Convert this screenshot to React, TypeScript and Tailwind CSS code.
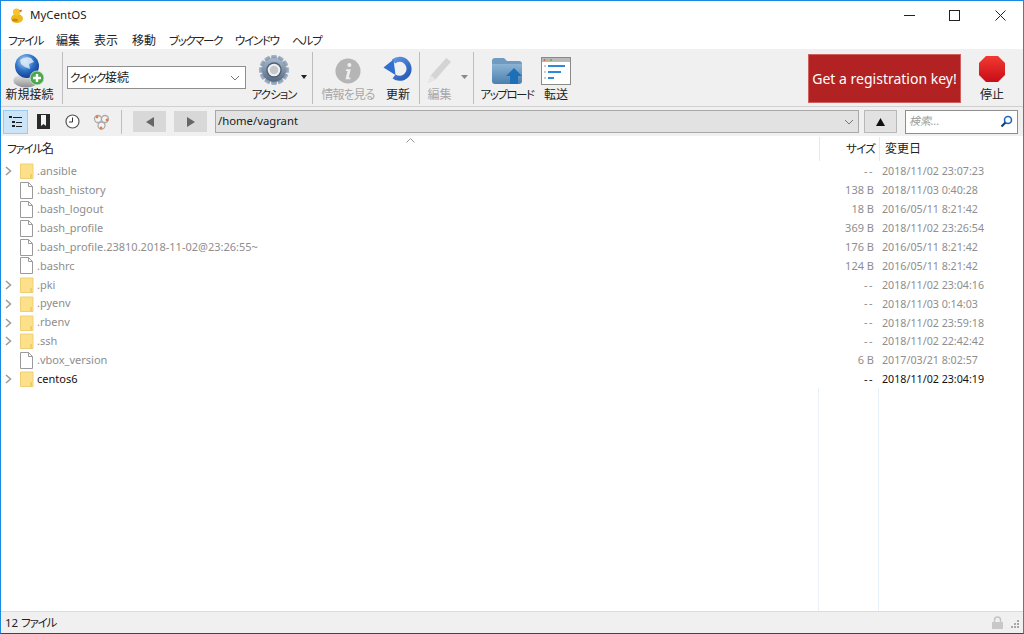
import React from "react";

const font = "font-['Noto_Sans','Noto_Sans_CJK_JP',sans-serif] [font-feature-settings:'palt']";

const rows: { n: string; s: string; d: string; dir: boolean; dark?: boolean }[] = [
  { n: ".ansible", s: "--", d: "2018/11/02 23:07:23", dir: true },
  { n: ".bash_history", s: "138 B", d: "2018/11/03 0:40:28", dir: false },
  { n: ".bash_logout", s: "18 B", d: "2016/05/11 8:21:42", dir: false },
  { n: ".bash_profile", s: "369 B", d: "2018/11/02 23:26:54", dir: false },
  { n: ".bash_profile.23810.2018-11-02@23:26:55~", s: "176 B", d: "2016/05/11 8:21:42", dir: false },
  { n: ".bashrc", s: "124 B", d: "2016/05/11 8:21:42", dir: false },
  { n: ".pki", s: "--", d: "2018/11/02 23:04:16", dir: true },
  { n: ".pyenv", s: "--", d: "2018/11/03 0:14:03", dir: true },
  { n: ".rbenv", s: "--", d: "2018/11/02 23:59:18", dir: true },
  { n: ".ssh", s: "--", d: "2018/11/02 22:42:42", dir: true },
  { n: ".vbox_version", s: "6 B", d: "2017/03/21 8:02:57", dir: false },
  { n: "centos6", s: "--", d: "2018/11/02 23:04:19", dir: true, dark: true },
];

const menus: { t: string; c: string }[] = [
  { t: "ファイル", c: "w-[34px] text-[11.5px] tracking-[-1.2px]" },
  { t: "編集", c: "w-[24px] text-[12px]" },
  { t: "表示", c: "w-[24px] text-[12px]" },
  { t: "移動", c: "w-[23px] text-[12px]" },
  { t: "ブックマーク", c: "w-[52px] text-[11.5px] tracking-[-1.4px]" },
  { t: "ウインドウ", c: "w-[43px] text-[11.5px] tracking-[-1.3px]" },
  { t: "ヘルプ", c: "w-[28px] text-[11.5px] tracking-[-1.1px]" },
];

function Duck() {
  return (
    <svg width="16" height="17" viewBox="0 0 16 17">
      <ellipse cx="8" cy="11.5" rx="6" ry="4.5" fill="#f0b820" />
      <circle cx="7.5" cy="5" r="3.6" fill="#f5c62c" />
      <path d="M10 3.5 L13 2.5 L12 5.5 Z" fill="#d9601a" />
      <ellipse cx="6" cy="13" rx="3" ry="1.6" fill="#c98a10" />
    </svg>
  );
}

function GlobeIcon() {
  return (
    <svg className="mt-[2px]" width="36" height="36" viewBox="0 0 36 36">
      <defs>
        <radialGradient id="gl" cx="40%" cy="30%" r="70%">
          <stop offset="0" stopColor="#b5d8f7" />
          <stop offset="0.55" stopColor="#2f74c8" />
          <stop offset="1" stopColor="#123f90" />
        </radialGradient>
        <linearGradient id="gb" x1="0" y1="0" x2="0" y2="1">
          <stop offset="0" stopColor="#efefef" />
          <stop offset="1" stopColor="#8f8f8f" />
        </linearGradient>
      </defs>
      <ellipse cx="14" cy="27.5" rx="12.5" ry="7" fill="url(#gb)" />
      <circle cx="15" cy="13" r="12" fill="url(#gl)" />
      <path d="M8 7 Q13 3 19 5 L22 9 L17 11 L18 16 L13 14 L9 11 Z" fill="#e3eef8" opacity="0.8" />
      <circle cx="25" cy="25" r="7" fill="#4ea64e" stroke="#d8ecd8" strokeWidth="0.8" />
      <path d="M25 21v8M21 25h8" stroke="#fff" strokeWidth="2.4" />
    </svg>
  );
}

function GearIcon() {
  const teeth = Array.from({ length: 12 }, (_, i) => i * 30);
  return (
    <svg className="mt-[3px]" width="32" height="32" viewBox="0 0 34 34">
      <defs>
        <linearGradient id="ge" x1="0" y1="0" x2="0" y2="1">
          <stop offset="0" stopColor="#a9bacd" />
          <stop offset="1" stopColor="#54687f" />
        </linearGradient>
      </defs>
      {teeth.map((a) => (
        <rect key={a} x="14" y="1" width="6" height="8" rx="1" fill="url(#ge)" transform={`rotate(${a} 17 17)`} />
      ))}
      <circle cx="17" cy="17" r="12.5" fill="url(#ge)" />
      <circle cx="17" cy="17" r="7.5" fill="#f0f0f0" stroke="#4e6075" strokeWidth="1.5" />
      <circle cx="17" cy="17" r="4.5" fill="#c4c8cc" />
    </svg>
  );
}

function InfoIcon() {
  return (
    <svg className="mt-[7px]" width="26" height="26" viewBox="0 0 28 28">
      <circle cx="14" cy="14" r="13.5" fill="#b5b5b5" />
      <circle cx="15.5" cy="7.5" r="2.2" fill="#efefef" />
      <path d="M12 12h5l-2.2 9h2l-.5 2h-5l2.2-9h-2z" fill="#efefef" />
    </svg>
  );
}

function RefreshIcon() {
  return (
    <svg className="mt-[3px]" width="31" height="30" viewBox="0 0 31 30">
      <defs>
        <linearGradient id="rf" gradientUnits="userSpaceOnUse" x1="5" y1="3" x2="28" y2="26">
          <stop offset="0" stopColor="#6aa4ec" />
          <stop offset="1" stopColor="#1c50b0" />
        </linearGradient>
      </defs>
      <path d="M10.5 7.5 A9.5 9.5 0 1 1 11 22.5" fill="none" stroke="url(#rf)" strokeWidth="5" />
      <path d="M0.5 13.5 L10.5 5.5 L12.5 21 Z" fill="#2f6fd0" />
    </svg>
  );
}

function PencilIcon() {
  return (
    <svg className="mt-[5px]" width="27" height="29" viewBox="0 0 28 30">
      <path d="M2 28 L5 20 L21 2 L26 6 L10 24 Z" fill="#d4d4d4" />
      <path d="M2 28 L5 20 L10 24 Z" fill="#e6e6e6" />
    </svg>
  );
}

function UploadIcon() {
  return (
    <svg className="mt-[6px]" width="32" height="28" viewBox="0 0 32 28">
      <defs>
        <linearGradient id="fo" x1="0" y1="0" x2="0" y2="1">
          <stop offset="0" stopColor="#8db3d4" />
          <stop offset="1" stopColor="#4a7fae" />
        </linearGradient>
      </defs>
      <path d="M1 4 Q1 1 4 1 H13 L16 4 H28 Q31 4 31 7 V10 H1 Z" fill="#6f9bc0" />
      <path d="M1 7 H31 V24 Q31 27 28 27 H4 Q1 27 1 24 Z" fill="url(#fo)" />
      <path d="M23 11 L31 19 H27 V27 H19 V19 H15 Z" fill="#1d6fb8" />
    </svg>
  );
}

function TransferIcon() {
  return (
    <svg className="mt-[6px]" width="30" height="28" viewBox="0 0 30 28">
      <rect x="0.5" y="0.5" width="29" height="27" fill="#fff" stroke="#8a8a8a" />
      <rect x="1" y="1" width="28" height="4" fill="#b9b9b9" />
      <circle cx="3.5" cy="3" r="1" fill="#e05a50" />
      <circle cx="7" cy="3" r="1" fill="#e0b040" />
      <circle cx="10" cy="3" r="1" fill="#50b050" />
      <rect x="7" y="8" width="17" height="2" fill="#2b8ae0" />
      <rect x="7" y="14" width="13" height="2" fill="#2b8ae0" />
      <rect x="7" y="20" width="6" height="2" fill="#2b8ae0" />
      <rect x="3" y="8" width="2" height="2" fill="#ccc" />
      <rect x="3" y="14" width="2" height="2" fill="#ccc" />
      <rect x="3" y="20" width="2" height="2" fill="#ccc" />
    </svg>
  );
}

function StopIcon() {
  return (
    <svg className="mt-[4px]" width="28" height="28" viewBox="0 0 28 28">
      <defs>
        <linearGradient id="st" x1="0" y1="0" x2="0" y2="1">
          <stop offset="0" stopColor="#f23a30" />
          <stop offset="1" stopColor="#c80c18" />
        </linearGradient>
      </defs>
      <path d="M8 1 H20 L27 8 V20 L20 27 H8 L1 20 V8 Z" fill="url(#st)" />
    </svg>
  );
}

function FolderIcon() {
  return (
    <svg width="14" height="16" viewBox="0 0 14 16">
      <path d="M0.5 1 H13 V15.5 H0.5 Z" fill="#fde08a" stroke="#f0cf74" />
      <path d="M11 11 V15" stroke="#e3bc55" />
    </svg>
  );
}

function FileIcon() {
  return (
    <svg width="13" height="17" viewBox="0 0 13 17">
      <path d="M0.5 0.5 H8.5 L12.5 4.5 V16.5 H0.5 Z" fill="#fff" stroke="#9a9a9a" />
      <path d="M8.5 0.5 V4.5 H12.5" fill="none" stroke="#9a9a9a" />
    </svg>
  );
}

function Chevron() {
  return (
    <svg width="7" height="10" viewBox="0 0 7 10">
      <path d="M1 1 L5.5 5 L1 9" fill="none" stroke="#999" strokeWidth="1.5" />
    </svg>
  );
}

function Caret() {
  return (
    <svg width="10" height="6" viewBox="0 0 10 6">
      <path d="M1 1 L5 5 L9 1" fill="none" stroke="#777" strokeWidth="1" />
    </svg>
  );
}

function Sep() {
  return <div className="w-px h-[52px] bg-[#bdbdbd] mt-[1px]" />;
}

function Tool({ icon, label, w, muted, tc = "text-[12px]" }: { icon: React.ReactNode; label: string; w: string; muted?: boolean; tc?: string }) {
  return (
    <div className={`${w} flex flex-col items-center shrink-0`}>
      <div className="h-[36px] flex items-start justify-center">{icon}</div>
      <span className={`leading-[16px] whitespace-nowrap ${tc} ${muted ? "text-[#a8a8a8]" : "text-[#222]"}`}>
        {label}
      </span>
    </div>
  );
}

export default function App() {
  return (
    <div className={`${font} w-[1024px] h-[634px] flex flex-col bg-white border-x border-t border-b border-x-[#1a8ae0] border-t-[#1a8ae0] border-b-[#444] overflow-hidden text-[#1a1a1a]`}>
      <div className="h-[28px] flex items-center shrink-0">
        <div className="ml-[8px] mr-[5px] flex"><Duck /></div>
        <span className="text-[11.5px] text-[#222]">MyCentOS</span>
        <div className="ml-auto flex items-center">
          <svg className="mr-[34px]" width="11" height="11" viewBox="0 0 11 11"><path d="M0 5.5H11" stroke="#222" /></svg>
          <svg className="mr-[35px]" width="11" height="11" viewBox="0 0 11 11"><rect x="0.5" y="0.5" width="10" height="10" fill="none" stroke="#222" /></svg>
          <svg className="mr-[17px]" width="11" height="11" viewBox="0 0 11 11"><path d="M0.5 0.5L10.5 10.5M10.5 0.5L0.5 10.5" stroke="#222" /></svg>
        </div>
      </div>

      <div className="h-[20px] flex items-center gap-[14px] pl-[7px] pt-[3px] text-[#222] shrink-0">
        {menus.map((m) => (
          <span key={m.t} className={`${m.c} whitespace-nowrap`}>{m.t}</span>
        ))}
      </div>

      <div className="h-[58px] bg-[#f0f0f0] border-b border-[#d0d0d0] flex items-start pt-[2px] shrink-0">
        <div className="ml-[1px]"><Tool icon={<GlobeIcon />} label="新規接続" w="w-[55px]" /></div>
        <div className="ml-[5px]"><Sep /></div>
        <div className="ml-[4px] mt-[15px] w-[179px] h-[23px] bg-white border border-[#8e8e8e] flex items-center justify-between pl-[2px] pr-[5px] text-[12px]">
          <span className="whitespace-nowrap"><span className="text-[11.5px] tracking-[-1.2px]">クイック</span>接続</span>
          <Caret />
        </div>
        <div className="ml-[1px]"><Tool icon={<GearIcon />} label="アクション" w="w-[54px]" tc="text-[11.5px] tracking-[-1px]" /></div>
        <svg className="mt-[24px]" width="6" height="4" viewBox="0 0 6 4"><path d="M0 0H6L3 4Z" fill="#222" /></svg>
        <div className="ml-[5px]"><Sep /></div>
        <div className="ml-[6px]"><Tool icon={<InfoIcon />} label="情報を見る" w="w-[58px]" muted tc="text-[12px] tracking-[-1px]" /></div>
        <div className="ml-[1px]"><Tool icon={<RefreshIcon />} label="更新" w="w-[40px]" /></div>
        <div className="ml-[1px]"><Sep /></div>
        <div className="ml-[3px]"><Tool icon={<PencilIcon />} label="編集" w="w-[33px]" muted /></div>
        <svg className="ml-[5px] mt-[24px]" width="7" height="4" viewBox="0 0 7 4"><path d="M0 0H7L3.5 4Z" fill="#888" /></svg>
        <div className="ml-[5px]"><Sep /></div>
        <div className="ml-[4px]"><Tool icon={<UploadIcon />} label="アップロード" w="w-[58px]" tc="text-[11.5px] tracking-[-1.5px]" /></div>
        <div className="ml-[1px]"><Tool icon={<TransferIcon />} label="転送" w="w-[38px]" /></div>
        <div className="ml-auto flex items-start">
          <div className="w-[153px] h-[49px] bg-[#b22222] border border-[#d06060] text-white text-[14px] flex items-center justify-center mt-[3px]">
            Get a registration key!
          </div>
          <div className="ml-[9px] mr-[9px]"><Tool icon={<StopIcon />} label="停止" w="w-[44px]" /></div>
        </div>
      </div>

      <div className="h-[29px] bg-[#f0f0f0] flex items-center shrink-0">
        <div className="ml-[2px] w-[25px] h-[24px] bg-[#cce4f7] border border-[#99ccf0] flex items-center justify-center">
          <svg width="13" height="13" viewBox="0 0 13 13">
            <path d="M0 1h3v2H0zM4 2h9v1H4zM3 6h3v2H3zM7 7h6v1H7zM3 10h3v2H3zM7 11h6v1H7z" fill="#222" />
          </svg>
        </div>
        <div className="w-[28px] flex justify-center ml-[1px]">
          <svg width="13" height="15" viewBox="0 0 13 15">
            <path d="M0 0H13V15H0Z" fill="#2a2a2a" />
            <path d="M4 1H9V12L6.5 10L4 12Z" fill="#f4f4f4" />
          </svg>
        </div>
        <div className="w-[30px] flex justify-center">
          <svg width="15" height="15" viewBox="0 0 15 15">
            <circle cx="7.5" cy="7.5" r="6.5" fill="#fff" stroke="#555" strokeWidth="1.2" />
            <path d="M7.5 3.5V8H4" fill="none" stroke="#333" />
          </svg>
        </div>
        <div className="w-[28px] flex justify-center">
          <svg width="17" height="16" viewBox="0 0 17 16">
            <circle cx="5" cy="5" r="3.5" fill="#f4f4f4" stroke="#aaa" strokeWidth="1.3" />
            <circle cx="12" cy="5" r="3.5" fill="#f4f4f4" stroke="#aaa" strokeWidth="1.3" />
            <circle cx="8.5" cy="11.5" r="3.5" fill="#f4f4f4" stroke="#aaa" strokeWidth="1.3" />
            <circle cx="4" cy="3" r="1.4" fill="#e08048" />
            <circle cx="14" cy="6" r="1.4" fill="#e08048" />
            <circle cx="8" cy="14" r="1.4" fill="#e08048" />
          </svg>
        </div>
        <div className="ml-[6px] w-px h-[24px] bg-[#bdbdbd]" />
        <div className="ml-[11px] w-[33px] h-[21px] bg-[#d8d8d8] flex items-center justify-center">
          <svg width="8" height="10" viewBox="0 0 8 10"><path d="M8 0V10L0 5Z" fill="#666" /></svg>
        </div>
        <div className="ml-[8px] w-[33px] h-[21px] bg-[#d8d8d8] flex items-center justify-center">
          <svg width="8" height="10" viewBox="0 0 8 10"><path d="M0 0V10L8 5Z" fill="#666" /></svg>
        </div>
        <div className="ml-[8px] w-[644px] h-[23px] bg-[#e2e2e2] border border-[#a8a8a8] flex items-center justify-between pl-[2px] pr-[4px] text-[11.3px]">
          <span>/home/vagrant</span>
          <Caret />
        </div>
        <div className="ml-[5px] w-[33px] h-[23px] bg-[#e2e2e2] border border-[#b8b8b8] flex items-center justify-center">
          <svg width="9" height="8" viewBox="0 0 9 8"><path d="M0 8H9L4.5 0Z" fill="#111" /></svg>
        </div>
        <div className="ml-[8px] w-[113px] h-[24px] bg-white border border-[#8e8e8e] flex items-center justify-between pl-[3px] pr-[4px]">
          <span className="text-[11px] italic text-[#a0a0a0]">検索...</span>
          <svg width="13" height="13" viewBox="0 0 13 13">
            <circle cx="8" cy="5" r="3.5" fill="#fff" stroke="#1f6ab8" strokeWidth="1.6" />
            <path d="M5.5 7.5L1.5 11.5" stroke="#123f7a" strokeWidth="2.2" />
          </svg>
        </div>
      </div>

      <div className="flex-1 relative flex flex-col min-h-0">
        <div className="h-[26px] flex items-center text-[12px] text-[#222] shrink-0 relative">
          <span className="ml-[6px] whitespace-nowrap"><span className="text-[11.5px] tracking-[-1.2px]">ファイル</span>名</span>
          <svg className="absolute left-[405px] top-[2px]" width="9" height="5" viewBox="0 0 9 5"><path d="M0.5 4.5L4.5 0.5L8.5 4.5" fill="none" stroke="#999" /></svg>
          <div className="ml-auto w-[60px] h-[24px] self-start border-l border-[#e8e8e8] flex items-center justify-end pr-[4px] mt-[1px] text-[11.5px] tracking-[-0.8px]">サイズ</div>
          <div className="w-[144px] h-[24px] self-start border-l border-[#e8e8e8] flex items-center pl-[5px] mt-[1px]">変更日</div>
        </div>

        <div className="flex-1 relative">
          <div className="absolute left-[817px] top-[226px] bottom-0 w-px bg-[#e6f1fb]" />
          <div className="absolute left-[877px] top-[226px] bottom-0 w-px bg-[#e6f1fb]" />
          {rows.map((r) => {
            const c = r.dark ? "text-[#111]" : "text-[#8e8e8e]";
            return (
              <div key={r.n} className={`h-[18.9px] flex items-center text-[11px] ${c}`}>
                <div className="w-[18px] pl-[4px] flex items-center">{r.dir && <Chevron />}</div>
                <div className="w-[18px] flex items-center pl-[1px]">{r.dir ? <FolderIcon /> : <FileIcon />}</div>
                <span className="whitespace-nowrap">{r.n}</span>
                <span className={`ml-auto w-[60px] text-right pr-[5px] ${r.s === "--" ? "tracking-[1.5px]" : ""}`}>{r.s}</span>
                <span className="w-[144px] pl-[3px] whitespace-nowrap text-[10.7px]">{r.d}</span>
              </div>
            );
          })}
        </div>

        <div className="h-[22px] bg-[#f0f0f0] border-t border-[#dcdcdc] flex items-center text-[11.5px] text-[#222] shrink-0">
          <span className="ml-[4px] whitespace-nowrap">12 <span className="text-[11.5px] tracking-[-1.2px]">ファイル</span></span>
          <div className="ml-auto flex items-center">
            <svg className="mr-[6px]" width="11" height="13" viewBox="0 0 11 13">
              <path d="M2.5 6V4a3 3 0 0 1 6 0v2" fill="none" stroke="#c4c4c4" strokeWidth="1.5" />
              <rect x="0" y="6" width="11" height="7" fill="#c8c8c8" />
            </svg>
            <svg className="mr-[3px] mt-[4px]" width="11" height="11" viewBox="0 0 11 11">
              <path d="M8 1h2v2H8zM5 4h2v2H5zM8 4h2v2H8zM2 7h2v2H2zM5 7h2v2H5zM8 7h2v2H8z" fill="#a8a8a8" />
            </svg>
          </div>
        </div>
      </div>
    </div>
  );
}
